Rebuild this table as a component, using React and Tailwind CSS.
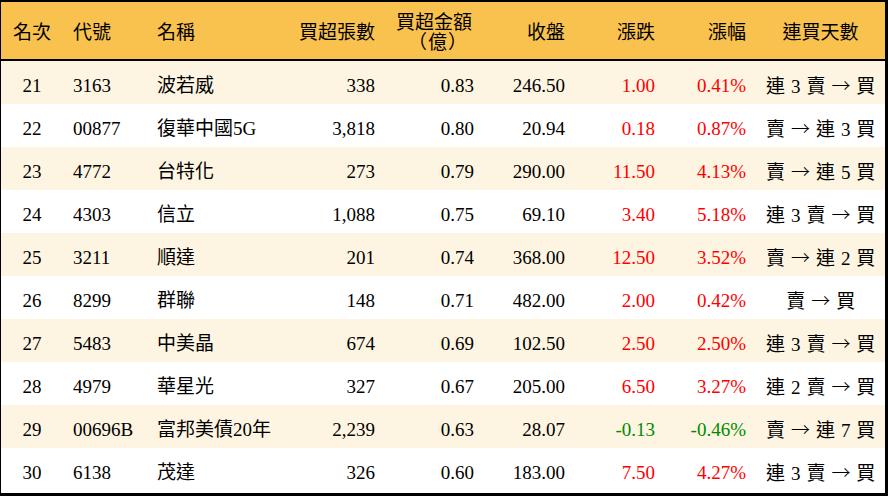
import React from 'react';

const rows = [
    ['21', '3163', '波若威', '338', '0.83', '246.50', '1.00', '0.41%', '連 3 賣 → 買', 'up'],
    ['22', '00877', '復華中國5G', '3,818', '0.80', '20.94', '0.18', '0.87%', '賣 → 連 3 買', 'up'],
    ['23', '4772', '台特化', '273', '0.79', '290.00', '11.50', '4.13%', '賣 → 連 5 買', 'up'],
    ['24', '4303', '信立', '1,088', '0.75', '69.10', '3.40', '5.18%', '連 3 賣 → 買', 'up'],
    ['25', '3211', '順達', '201', '0.74', '368.00', '12.50', '3.52%', '賣 → 連 2 買', 'up'],
    ['26', '8299', '群聯', '148', '0.71', '482.00', '2.00', '0.42%', '賣 → 買', 'up'],
    ['27', '5483', '中美晶', '674', '0.69', '102.50', '2.50', '2.50%', '連 3 賣 → 買', 'up'],
    ['28', '4979', '華星光', '327', '0.67', '205.00', '6.50', '3.27%', '連 2 賣 → 買', 'up'],
    ['29', '00696B', '富邦美債20年', '2,239', '0.63', '28.07', '-0.13', '-0.46%', '賣 → 連 7 買', 'down'],
    ['30', '6138', '茂達', '326', '0.60', '183.00', '7.50', '4.27%', '連 3 賣 → 買', 'up'],
];

const grid = 'grid grid-cols-[62px_84px_143px_95px_99px_91px_90px_91px_129px] items-center';

// arrow comes from the CJK font so it is full width like the reference
const Streak = ({ text }) => {
    const [before, after] = text.split('→');
    return (
        <>
            {before}
            <span className="font-['Noto_Sans_CJK_TC'] font-light">→</span>
            {after}
        </>
    );
};

const App = () => {
    return (
        <div
            className="w-[888px] h-[496px] bg-white text-black text-[19px] leading-none border-l border-t-2 border-r-[3px] border-b-[3px] border-black"
            style={{ fontFamily: '"Liberation Serif", "Noto Sans CJK TC", serif' }}
        >
            {/* Header */}
            <div className={`${grid} h-[59px] pt-[4px] bg-[#f9c24f] border-b-2 border-black`}>
                <div className="text-center">名次</div>
                <div className="pl-[10px]">代號</div>
                <div className="pl-[10px]">名稱</div>
                <div className="text-right pr-[10px]">買超張數</div>
                <div className="text-right pr-[12px] leading-[20px]">
                    <div>買超金額</div>
                    <div className="pr-[4px] tracking-[1px]">（億）</div>
                </div>
                <div className="text-right pr-[10px]">收盤</div>
                <div className="text-right pr-[10px]">漲跌</div>
                <div className="text-right pr-[10px]">漲幅</div>
                <div className="text-center">連買天數</div>
            </div>

            {/* Rows */}
            {rows.map((r, i) => {
                const color = r[9] === 'down' ? 'text-[#008a00]' : 'text-[#ff0000]';
                return (
                    <div
                        key={r[0]}
                        className={`${grid} h-[43px] pt-[6px] ${i % 2 === 0 ? 'bg-[#fdf5e2]' : 'bg-white'}`}
                    >
                        <div className="text-center">{r[0]}</div>
                        <div className="pl-[10px]">{r[1]}</div>
                        <div className="pl-[10px] whitespace-nowrap">{r[2]}</div>
                        <div className="text-right pr-[10px]">{r[3]}</div>
                        <div className="text-right pr-[10px]">{r[4]}</div>
                        <div className="text-right pr-[10px]">{r[5]}</div>
                        <div className={`text-right pr-[10px] ${color}`}>{r[6]}</div>
                        <div className={`text-right pr-[10px] ${color}`}>{r[7]}</div>
                        <div className="text-center whitespace-pre tracking-[0.6px] pl-[1px]">
                            <Streak text={r[8]} />
                        </div>
                    </div>
                );
            })}
        </div>
    );
};

export default App;
